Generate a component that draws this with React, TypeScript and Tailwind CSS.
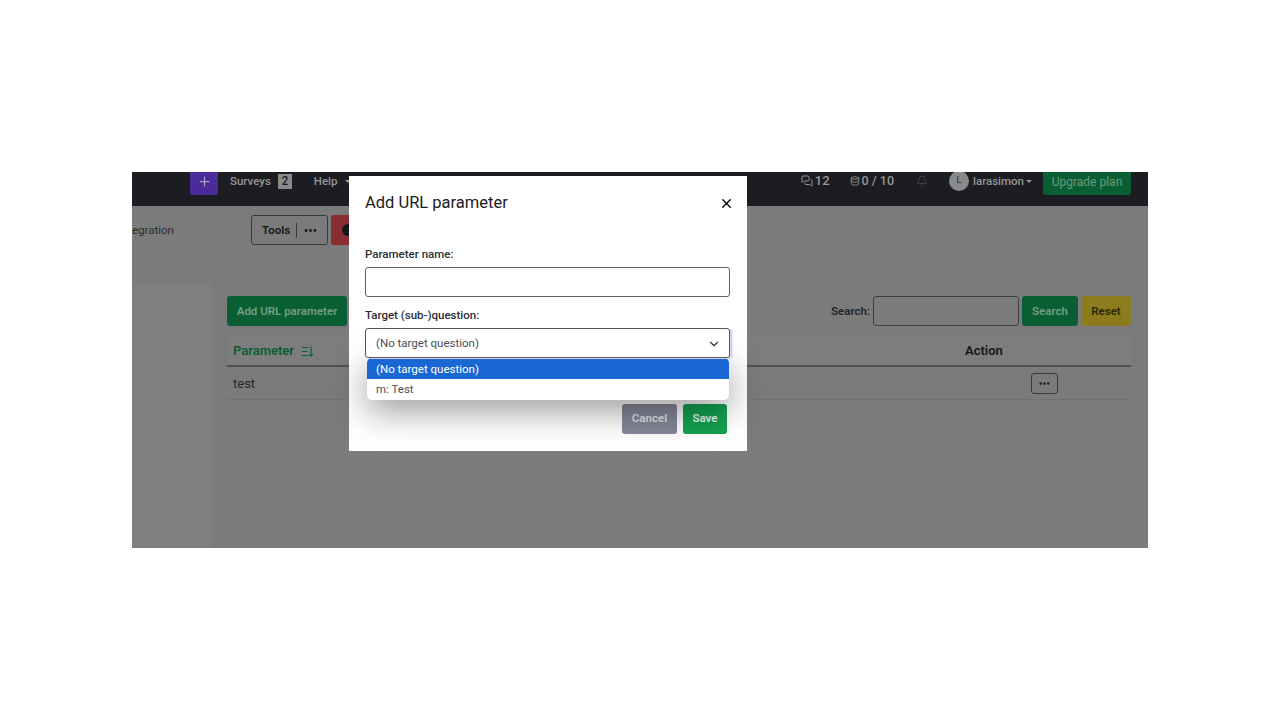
import React from "react";
import { ChevronDown, Database, Bell, X, MessagesSquare, Plus, Ellipsis } from "lucide-react";

const font = "font-['Roboto','Liberation_Sans',sans-serif]";

const SortIcon = () => (
  <svg width="13" height="13" viewBox="0 0 13 13" fill="none" stroke="currentColor" strokeWidth="1.1">
    <path d="M1 2.5h6M1 6.5h5M1 10.5h6" />
    <path d="M10 1.5v9.5M8.2 9l1.8 2.2L11.8 9" />
  </svg>
);

const Caret = ({ className = "" }: { className?: string }) => (
  <span className={`inline-block border-x-[3px] border-t-[3px] border-x-transparent border-t-current ${className}`} />
);

const Background = () => (
  <div className="flex h-full flex-col bg-[#7b7b7c]">
    <header className="h-[34px] shrink-0 overflow-hidden bg-[#1c1d22] text-[11.5px] text-[#969696]">
      <div className="-mt-[5px] flex h-[28px] items-center pl-[58px] pr-[17px]">
        <button className="flex h-[28px] w-[28px] items-center justify-center rounded-[3px] bg-[#4b2b99] text-[#a99fc4]">
          <Plus size={15} />
        </button>
        <span className="ml-[12px] pt-[2px] font-medium">Surveys</span>
        <span className="ml-[7px] flex h-[15px] w-[14px] items-center justify-center bg-[#8a8a8a] text-[12px] font-medium text-[#1c1d22]">2</span>
        <span className="ml-[22px] pt-[2px] font-medium">Help</span>
        <Caret className="ml-[7px]" />
        <div className="ml-auto flex items-center">
          <MessagesSquare size={12} />
          <span className="ml-[2px] text-[13px] font-medium">12</span>
          <Database size={10} className="ml-[20px]" />
          <span className="ml-[2px] text-[12.5px] font-medium">0 / 10</span>
          <Bell size={12} className="ml-[22px] text-[#3d3e42]" />
          <span className="ml-[21px] flex h-[20px] w-[20px] items-center justify-center rounded-full bg-[#8a8a8a] text-[9px] text-[#2a2a2a]">L</span>
          <span className="ml-[4px] pt-[2px] font-medium">larasimon</span>
          <Caret className="ml-[2px]" />
          <button className="ml-[11px] flex h-[28px] w-[88px] items-center justify-center rounded-[3px] bg-[#0a5e33] pt-[2px] text-[12px] text-[#6a9a81]">Upgrade plan</button>
        </div>
      </div>
    </header>

    <div className="flex h-[77px] shrink-0 items-start pt-[9px] text-[11.5px] text-[#2a2c30]">
      <div className="flex h-[30px] w-[119px] items-center overflow-hidden pt-[2px]">
        <span>egration</span>
      </div>
      <div className="flex h-[30px] w-[77px] items-center rounded-[3px] border border-[#38393d] pl-[10px]">
        <span className="pt-[1px] font-semibold text-[#16171a]">Tools</span>
        <span className="ml-[6px] h-[15px] w-px bg-[#38393d]" />
        <Ellipsis size={15} className="ml-[6px] text-[#16171a]" strokeWidth={2.6} />
      </div>
      <div className="ml-[3px] flex h-[30px] w-[40px] items-center rounded-[3px] bg-[#8a2d33] pl-[11px]">
        <span className="h-[12px] w-[12px] rounded-full bg-[#16171a]" />
      </div>
    </div>

    <div className="flex min-h-0 flex-1">
      <aside className="w-[79px] shrink-0 bg-[#7f7f80]" />
      <main className="flex-1 pl-[16px] pr-[17px] pt-[13px]">
        <div className="flex h-[30px] items-center text-[11.5px] font-semibold">
          <button className="flex h-[30px] w-[120px] items-center justify-center rounded-[3px] bg-[#0a5e33] pt-[2px] text-[#6f9f86]">Add URL parameter</button>
          <span className="ml-auto pt-[2px] text-[#24262b]">Search:</span>
          <div className="ml-[3px] h-[30px] w-[146px] rounded-[3px] border border-[#3d3e42]" />
          <button className="ml-[3px] flex h-[30px] w-[56px] items-center justify-center rounded-[3px] bg-[#0a5e33] pt-[2px] text-[#6f9f86]">Search</button>
          <button className="ml-[3px] flex h-[30px] w-[50px] items-center justify-center rounded-[3px] bg-[#8c7c1d] pt-[2px] text-[#2c2708]">Reset</button>
        </div>
        <div className="mt-[9px] flex h-[32px] items-center border-b-2 border-[#4f5056] bg-[#7d7d7e] pt-[2px] text-[13px] font-semibold">
          <span className="flex flex-1 items-center gap-[7px] pl-[6px] text-[#0a5e33]">
            Parameter
            <SortIcon />
          </span>
          <span className="w-[171px] pl-[5px] text-[#16171a]">Action</span>
        </div>
        <div className="flex h-[33px] items-center border-b border-[#727273] text-[13px] text-[#24262b]">
          <span className="flex-1 pl-[6px] pt-[2px]">test</span>
          <div className="flex h-full w-[171px] items-center border-l border-[#787879] pl-[70px]">
            <span className="flex h-[21px] w-[27px] items-center justify-center rounded-[3px] border border-[#38393d] text-[#16171a]">
              <Ellipsis size={13} strokeWidth={2.6} />
            </span>
          </div>
        </div>
      </main>
    </div>
  </div>
);

const Dialog = () => (
  <div className="absolute left-[217px] top-[4px] h-[275px] w-[398px] bg-white pl-[16px] pr-[17px] text-[#1e2128]">
    <div className="flex h-[53px] items-center justify-between pt-[2px]">
      <h2 className="text-[16.5px] font-normal leading-none text-[#1a1c22]">Add URL parameter</h2>
      <X size={15} strokeWidth={2.2} className="mr-[-4px] text-black" />
    </div>
    <label className="mt-[18px] block text-[11.5px] font-medium leading-[14px] text-[#2b2f38]">Parameter name:</label>
    <div className="mt-[6px] h-[30px] rounded-[3px] border border-[#5f6068] bg-white" />
    <label className="mt-[11px] block text-[11.5px] font-medium leading-[14px] text-[#2b2f38]">Target (sub-)question:</label>
    <div className="relative mt-[6px]">
      <div className="relative z-30 flex h-[30px] items-center justify-between rounded-[3px] border border-[#55565c] bg-white pl-[10px] pr-[8px] pt-[1px] text-[11.5px] text-[#4a4d55] shadow-[2.5px_1px_0_#d9cef5]">
        (No target question)
        <ChevronDown size={14} className="text-[#30323a]" />
      </div>
      <ul className="absolute left-[2px] right-[1px] top-[30px] z-20 overflow-hidden rounded-[5px] bg-white text-[11.5px] shadow-[0_10px_36px_rgba(0,0,0,0.42)]">
        <li className="flex h-[21px] items-center bg-[#1967d2] pl-[9px] pt-[2px] text-white">(No target question)</li>
        <li className="flex h-[21px] items-center pl-[9px] text-[#4a4d55]">m: Test</li>
      </ul>
    </div>
    <div className="mt-[46px] flex justify-end gap-[6px] pr-[3px] text-[11.5px] font-semibold">
      <button className="flex h-[30px] w-[55px] items-center justify-center rounded-[3px] bg-[#858899] text-[#e3e3e8]">Cancel</button>
      <button className="flex h-[30px] w-[44px] items-center justify-center rounded-[3px] bg-[#12a150] text-[#e8f6ee]">Save</button>
    </div>
  </div>
);

export default function App() {
  return (
    <div className={`h-[720px] w-[1280px] overflow-hidden bg-white pl-[132px] pt-[172px] ${font}`}>
      <div className="relative h-[376px] w-[1016px] overflow-hidden">
        <Background />
        <Dialog />
      </div>
    </div>
  );
}
